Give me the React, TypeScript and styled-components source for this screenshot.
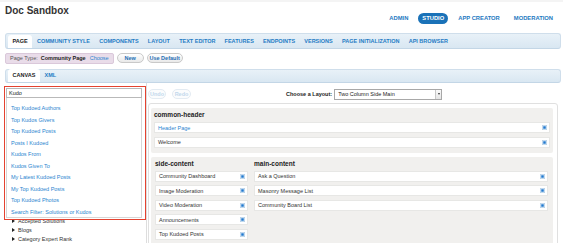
import React from "react";
import styled, { createGlobalStyle } from "styled-components";

const GlobalStyle = createGlobalStyle`
  html, body {
    margin: 0;
    padding: 0;
    background: #fff;
  }
  body {
    width: 563px;
    height: 243px;
    overflow: hidden;
    font-family: "Liberation Sans", Arial, Helvetica, sans-serif;
    color: #333;
  }
`;

const Page = styled.div`
  width: 563px;
  height: 243px;
  overflow: hidden;
  box-sizing: border-box;
  padding: 0 2px 0 5px;
  border-top: 2px solid #f4f4f4;
`;

const Header = styled.div`
  display: flex;
  justify-content: space-between;
  align-items: flex-start;
  height: 31px;
`;

const Title = styled.div`
  margin-top: 3px;
  font-size: 10px;
  line-height: 12px;
  font-weight: bold;
  color: #333;
`;

const MainNav = styled.div`
  display: flex;
  align-items: center;
  gap: 4px;
  margin-top: 11px;
  margin-right: 4px;
`;

const NavItem = styled.div<{ $active?: boolean }>`
  height: 11px;
  line-height: 11px;
  padding: 0 4px;
  border-radius: 6px;
  font-size: 5.8px;
  font-weight: bold;
  color: ${(p) => (p.$active ? "#fff" : "#1d78c1")};
  background: ${(p) => (p.$active ? "#1a72b8" : "transparent")};
  & + & {
    margin-left: 2px;
  }
`;

const TabBar = styled.div<{ $h: number }>`
  display: flex;
  align-items: flex-end;
  height: ${(p) => p.$h}px;
  box-sizing: border-box;
  padding-left: 2px;
  background: linear-gradient(#e8f1f8, #d9e7f2);
  border: 1px solid #cfdeeb;
  border-bottom-color: #c3d6e6;
  border-radius: 3px;
`;

const Tab = styled.div<{ $active?: boolean }>`
  height: 13px;
  line-height: 13px;
  padding: 0 4.6px;
  font-size: 5.5px;
  font-weight: bold;
  color: ${(p) => (p.$active ? "#222" : "#1f7bc4")};
  background: ${(p) => (p.$active ? "#fff" : "transparent")};
  border-radius: 3px 3px 0 0;
  white-space: nowrap;
`;

const PageTypeRow = styled.div`
  display: flex;
  align-items: center;
  gap: 3px;
  margin: 3px 0 5px;
  height: 12px;
`;

const PageTypeBox = styled.div`
  display: flex;
  align-items: center;
  gap: 3px;
  height: 11px;
  box-sizing: border-box;
  padding: 0 4px;
  background: #e9dce9;
  border: 1px solid #dac8da;
  border-radius: 2px;
  font-size: 5.5px;
  color: #555;
  & b {
    color: #222;
  }
  & a {
    color: #2a85d0;
    margin-left: 1px;
  }
`;

const PillButton = styled.div<{ $w: number; $disabled?: boolean }>`
  width: ${(p) => p.$w}px;
  height: 10px;
  line-height: 8px;
  box-sizing: border-box;
  text-align: center;
  border: 1px solid ${(p) => (p.$disabled ? "#e3ebf2" : "#c9c9c9")};
  border-radius: 6px;
  background: ${(p) =>
    p.$disabled ? "#fbfcfd" : "linear-gradient(#fff, #e9e9e9)"};
  font-size: 5.5px;
  font-weight: bold;
  color: ${(p) => (p.$disabled ? "#c2d8ec" : "#1f6fb5")};
`;

const Columns = styled.div`
  display: grid;
  grid-template-columns: 142px 1fr;
  height: 160px;
`;

const LeftPanel = styled.div`
  position: relative;
  box-sizing: border-box;
  padding: 5px 4px 0 1px;
  border-right: 1px solid #dddddd;
`;

const SearchWrap = styled.div`
  position: relative;
  z-index: 2;
`;

const SearchField = styled.div`
  height: 10px;
  line-height: 9px;
  box-sizing: border-box;
  padding: 0 2px;
  border: 1px solid #b9b9b9;
  background: #fff;
  font-size: 5.5px;
  color: #222;
`;

const Suggestions = styled.div`
  position: absolute;
  top: 100%;
  left: 0;
  right: 0;
  height: 120px;
  box-sizing: border-box;
  padding: 5px 0 0 4px;
  background: #fff;
  border: 1px solid #d6d6d6;
  border-top: none;
`;

const Suggestion = styled.div`
  height: 11.5px;
  line-height: 11.5px;
  font-size: 5.5px;
  color: #2a85d0;
  white-space: nowrap;
`;

const Highlight = styled.div`
  position: absolute;
  z-index: 3;
  left: -1px;
  top: 3px;
  width: 142px;
  height: 134px;
  box-sizing: border-box;
  border: 1.5px solid #e4422f;
  pointer-events: none;
`;

const Tree = styled.div`
  margin-top: 118px;
  padding-left: 6px;
`;

const TreeItem = styled.div`
  display: flex;
  align-items: center;
  gap: 3px;
  height: 9px;
  font-size: 5.5px;
  color: #333;
  &::before {
    content: "";
    border-left: 3px solid #222;
    border-top: 2px solid transparent;
    border-bottom: 2px solid transparent;
  }
`;

const RightPanel = styled.div`
  padding: 5px 3px 0 1px;
  overflow: hidden;
`;

const Toolbar = styled.div`
  display: flex;
  align-items: center;
  gap: 6px;
  height: 12px;
`;

const LayoutPicker = styled.div`
  display: flex;
  align-items: center;
  gap: 2px;
  margin-left: 89px;
  font-size: 5.5px;
  font-weight: bold;
  color: #222;
`;

const Select = styled.div`
  display: flex;
  align-items: center;
  justify-content: space-between;
  width: 108px;
  height: 11px;
  box-sizing: border-box;
  padding-left: 3px;
  border: 1px solid #a8a8a8;
  background: #fff;
  font-weight: normal;
  color: #222;
`;

const SelectArrow = styled.div`
  width: 6px;
  height: 9px;
  box-sizing: border-box;
  border-left: 1px solid #c8c8c8;
  background: linear-gradient(#fafafa, #e4e4e4);
  display: flex;
  align-items: center;
  justify-content: center;
  &::after {
    content: "";
    border-top: 2px solid #333;
    border-left: 1.5px solid transparent;
    border-right: 1.5px solid transparent;
  }
`;

const Canvas = styled.div`
  margin-top: 3px;
  border: 1px solid #e0e0e0;
  border-radius: 3px;
  padding: 4px 4px 0 2px;
  display: flex;
  flex-direction: column;
  gap: 4px;
  height: 150px;
`;

const Section = styled.div`
  background: #f1f0ee;
  border-radius: 2px;
  padding: 2px 3px 5px 3px;
`;

const SectionTitle = styled.div`
  height: 9px;
  line-height: 9px;
  margin-bottom: 3px;
  font-size: 6.5px;
  font-weight: bold;
  color: #222;
`;

const SplitSection = styled(Section)`
  display: grid;
  grid-template-columns: 93px 1fr;
  gap: 6px;
  padding-left: 4px;
  padding-right: 5px;
  flex: 1;
`;

const RowList = styled.div`
  display: flex;
  flex-direction: column;
  gap: 3.6px;
`;

const Row = styled.div<{ $link?: boolean }>`
  display: flex;
  align-items: center;
  justify-content: space-between;
  height: 11px;
  box-sizing: border-box;
  padding: 0 2px 0 3px;
  background: #fff;
  border: 1px solid #e7e7e5;
  font-size: 5.5px;
  color: ${(p) => (p.$link ? "#2a85d0" : "#333")};
`;

const RemoveIcon = () => (
  <svg width="5" height="5" viewBox="0 0 5 5">
    <rect x="0.25" y="0.25" width="4.5" height="4.5" fill="#cfe2f3" stroke="#a9c8e3" strokeWidth="0.5" />
    <rect x="1.3" y="1.3" width="2.4" height="2.4" fill="#1f78cf" />
  </svg>
);

const suggestions = [
  "Top Kudoed Authors",
  "Top Kudos Givers",
  "Top Kudoed Posts",
  "Posts I Kudoed",
  "Kudos From",
  "Kudos Given To",
  "My Latest Kudoed Posts",
  "My Top Kudoed Posts",
  "Top Kudoed Photos",
  "Search Filter: Solutions or Kudos",
];

const tabs = [
  "PAGE",
  "COMMUNITY STYLE",
  "COMPONENTS",
  "LAYOUT",
  "TEXT EDITOR",
  "FEATURES",
  "ENDPOINTS",
  "VERSIONS",
  "PAGE INITIALIZATION",
  "API BROWSER",
];

const sideContent = [
  "Community Dashboard",
  "Image Moderation",
  "Video Moderation",
  "Announcements",
  "Top Kudoed Posts",
];

const mainContent = ["Ask a Question", "Masonry Message List", "Community Board List"];

const App: React.FC = () => {
  return (
    <Page>
      <GlobalStyle />
      <Header>
        <Title>Doc Sandbox</Title>
        <MainNav>
          <NavItem>ADMIN</NavItem>
          <NavItem $active>STUDIO</NavItem>
          <NavItem>APP CREATOR</NavItem>
          <NavItem>MODERATION</NavItem>
        </MainNav>
      </Header>

      <TabBar $h={16}>
        {tabs.map((t, i) => (
          <Tab key={t} $active={i === 0}>
            {t}
          </Tab>
        ))}
      </TabBar>

      <PageTypeRow>
        <PageTypeBox>
          Page Type: <b>Community Page</b> <a>Choose</a>
        </PageTypeBox>
        <PillButton $w={27}>New</PillButton>
        <PillButton $w={36}>Use Default</PillButton>
      </PageTypeRow>

      <TabBar $h={14}>
        <Tab $active>CANVAS</Tab>
        <Tab>XML</Tab>
      </TabBar>

      <Columns>
        <LeftPanel>
          <SearchWrap>
            <SearchField>Kudo</SearchField>
            <Suggestions>
              {suggestions.map((s) => (
                <Suggestion key={s}>{s}</Suggestion>
              ))}
            </Suggestions>
          </SearchWrap>
          <Highlight />
          <Tree>
            <TreeItem>Accepted Solutions</TreeItem>
            <TreeItem>Blogs</TreeItem>
            <TreeItem>Category Expert Rank</TreeItem>
          </Tree>
        </LeftPanel>

        <RightPanel>
          <Toolbar>
            <PillButton $w={18} $disabled>
              Undo
            </PillButton>
            <PillButton $w={19} $disabled>
              Redo
            </PillButton>
            <LayoutPicker>
              Choose a Layout:
              <Select>
                Two Column Side Main
                <SelectArrow />
              </Select>
            </LayoutPicker>
          </Toolbar>

          <Canvas>
            <Section>
              <SectionTitle>common-header</SectionTitle>
              <RowList>
                <Row $link>
                  Header Page
                  <RemoveIcon />
                </Row>
                <Row>
                  Welcome
                  <RemoveIcon />
                </Row>
              </RowList>
            </Section>
            <SplitSection>
              <div>
                <SectionTitle>side-content</SectionTitle>
                <RowList>
                  {sideContent.map((c) => (
                    <Row key={c}>
                      {c}
                      <RemoveIcon />
                    </Row>
                  ))}
                </RowList>
              </div>
              <div>
                <SectionTitle>main-content</SectionTitle>
                <RowList>
                  {mainContent.map((c) => (
                    <Row key={c}>
                      {c}
                      <RemoveIcon />
                    </Row>
                  ))}
                </RowList>
              </div>
            </SplitSection>
          </Canvas>
        </RightPanel>
      </Columns>
    </Page>
  );
};

export default App;
